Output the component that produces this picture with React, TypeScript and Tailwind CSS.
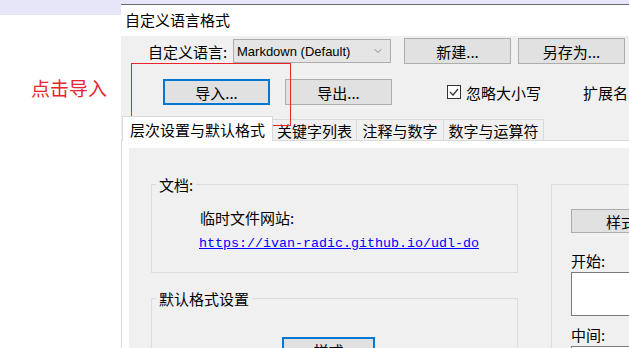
import React from 'react';
import { ChevronDown } from 'lucide-react';

const cjk = "font-['Noto_Sans_CJK_SC',sans-serif]";

const Btn = ({ label, focused, className = '' }: { label: string; focused?: boolean; className?: string }) => (
  <div
    className={`flex shrink-0 items-center justify-center bg-[#e1e1e1] text-[15px] leading-none text-black ${
      focused ? 'border-2 border-[#0078d7]' : 'border border-[#adadad]'
    } ${className}`}
  >
    {label}
  </div>
);

const Tab = ({ label, active, width }: { label: string; active?: boolean; width: string }) =>
  active ? (
    <div className={`relative z-10 -mb-px flex h-[25px] ${width} items-start justify-center border border-b-0 border-[#d9d9d9] bg-white pt-[5px] text-[15px] leading-none`}>
      {label}
    </div>
  ) : (
    <div className={`-ml-px flex h-[21px] ${width} items-center justify-center border border-b-0 border-[#d9d9d9] bg-[#f0f0f0] text-[15px] leading-none`}>
      {label}
    </div>
  );

const App = () => {
  return (
    <div className={`relative flex h-[348px] w-[629px] overflow-hidden bg-white text-black ${cjk}`}>
      {/* left side of the screen, outside the dialog */}
      <div className="flex w-[121px] shrink-0 flex-col">
        <div className="h-[15px] shrink-0 bg-[#e6e6f8]" />
        <div className="mt-[63px] pl-[31px] text-[19px] leading-none text-[#e8252b]">点击导入</div>
      </div>

      {/* dialog */}
      <div className="flex min-w-0 flex-1 flex-col">
        <div className="h-[4px] shrink-0 bg-[#e6e6f8]" />
        <div className="h-px shrink-0 bg-[#6b6b6b]" />
        <div className="flex h-[31px] shrink-0 items-center bg-white pl-[4px] pb-[2px] text-[15px] leading-none">自定义语言格式</div>

        <div className="flex min-h-0 flex-1 flex-col overflow-hidden bg-[#f0f0f0]">
          {/* row 1 */}
          <div className="mt-[2px] flex h-[26px] shrink-0 items-center">
            <div className="w-[112px] shrink-0 pl-[27px] text-[15px] leading-none">自定义语言:</div>
            <div className="flex h-[24px] w-[158px] shrink-0 items-center justify-between border border-[#adadad] bg-[#e5e5e5] pl-[3px] pr-[6px] font-['Liberation_Sans',sans-serif] text-[13px] leading-none">
              <span>Markdown (Default)</span>
              <ChevronDown className="h-[12px] w-[12px] text-[#666]" strokeWidth={1.5} />
            </div>
            <Btn label="新建..." className="ml-[13px] h-[26px] w-[107px]" />
            <Btn label="另存为..." className="ml-[7px] h-[26px] w-[107px]" />
          </div>

          {/* row 2 */}
          <div className="mt-[15px] flex h-[26px] shrink-0 items-center">
            <Btn label="导入..." focused className="ml-[42px] h-[26px] w-[107px]" />
            <Btn label="导出..." className="ml-[15px] h-[26px] w-[107px]" />
            <div className="ml-[55px] flex h-[14px] w-[14px] shrink-0 items-center justify-center border border-[#333] bg-white">
              <svg width="10" height="10" viewBox="0 0 10 10">
                <polyline points="1,5 4,8 9,2" fill="none" stroke="#333" strokeWidth="1.2" />
              </svg>
            </div>
            <span className="ml-[5px] shrink-0 text-[15px] leading-none">忽略大小写</span>
            <span className="ml-[42px] shrink-0 whitespace-nowrap text-[15px] leading-none">扩展名</span>
          </div>

          {/* tabs */}
          <div className="mt-[11px] ml-px flex shrink-0 items-end">
            <Tab label="层次设置与默认格式" active width="w-[151px]" />
            <Tab label="关键字列表" width="w-[85px]" />
            <Tab label="注释与数字" width="w-[88px]" />
            <Tab label="数字与运算符" width="w-[101px]" />
          </div>

          <div className="flex min-h-0 flex-1 flex-col border-l border-t border-[#d9d9d9] bg-white pl-[7px] pt-[7px]">
            <div className="flex flex-1 bg-[#f0f0f0]">
              {/* left column */}
              <div className="flex shrink-0 flex-col pl-[22px] pt-[29px]">
                <fieldset className="h-[96px] w-[367px] shrink-0 border border-[#dcdcdc]">
                  <legend className="ml-[4px] px-[3px] text-[15px] leading-[15px]">文档:</legend>
                  <div className="mt-[18px] pl-[48px] text-[15px] leading-[15px]">临时文件网站:</div>
                  <div className="mt-[11px] pl-[47px] font-['Liberation_Mono',monospace] text-[13.33px] leading-[16px] text-[#0000ff] underline">
                    https://ivan-radic.github.io/udl-do
                  </div>
                </fieldset>
                <fieldset className="mt-[18px] h-[80px] w-[367px] shrink-0 border border-[#dcdcdc]">
                  <legend className="ml-[4px] px-[3px] text-[15px] leading-[15px]">默认格式设置</legend>
                  <Btn label="样式" focused className="mt-[31px] ml-[130px] h-[26px] w-[93px]" />
                </fieldset>
              </div>

              {/* right column */}
              <div className="ml-[33px] flex shrink-0 flex-col pt-[36px]">
                <div className="w-[120px] border-l border-t border-[#dcdcdc] pb-[40px]">
                  <Btn label="样式" className="mt-[24px] ml-[19px] h-[24px] w-[100px]" />
                  <div className="mt-[20px] ml-[19px] text-[15px] leading-[15px]">开始:</div>
                  <div className="mt-[4px] ml-[19px] h-[44px] w-[100px] border border-[#7a7a7a] bg-white" />
                  <div className="mt-[11px] ml-[19px] text-[15px] leading-[15px]">中间:</div>
                  <div className="mt-[4px] ml-[19px] h-[44px] w-[100px] border border-[#7a7a7a] bg-white" />
                </div>
              </div>
            </div>
          </div>
        </div>
      </div>

      {/* red annotation box */}
      <div className="absolute left-[131px] top-[63px] h-[63px] w-[160px] border border-[#e8252b]" />
    </div>
  );
};

export default App;
